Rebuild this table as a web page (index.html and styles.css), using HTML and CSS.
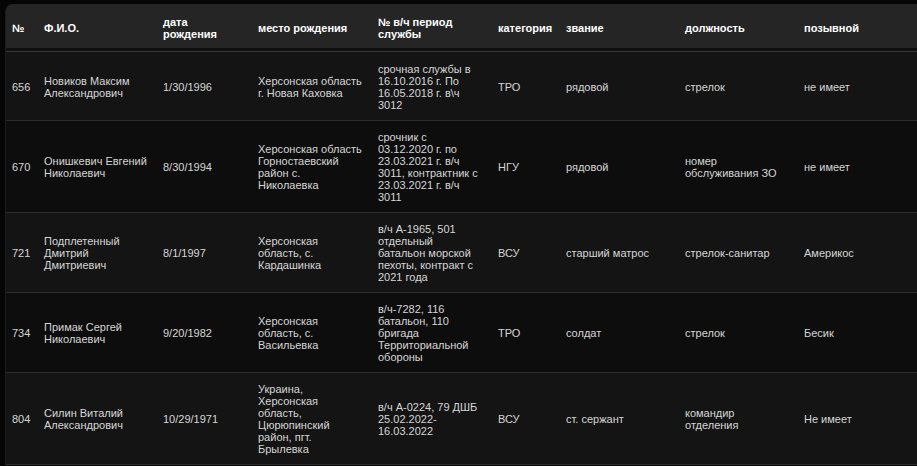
FILE: index.html
```html
<!DOCTYPE html>
<html lang="ru">
<head>
<meta charset="utf-8">
<title>Таблица</title>
<link rel="stylesheet" href="styles.css">
</head>
<body>
<div class="wrap">
<table class="grid">
<colgroup>
<col class="c-num"><col class="c-name"><col class="c-date"><col class="c-place"><col class="c-unit"><col class="c-cat"><col class="c-rank"><col class="c-pos"><col class="c-call">
</colgroup>
<thead>
<tr>
<th>№</th>
<th>Ф.И.О.</th>
<th>дата<br>рождения</th>
<th>место рождения</th>
<th>№ в/ч период<br>службы</th>
<th>категория</th>
<th>звание</th>
<th>должность</th>
<th>позывной</th>
</tr>
</thead>
<tbody>
<tr>
<td>656</td>
<td>Новиков Максим Александрович</td>
<td>1/30/1996</td>
<td>Херсонская область г. Новая Каховка</td>
<td>срочная службы в 16.10.2016 г. По 16.05.2018 г. в\ч 3012</td>
<td>ТРО</td>
<td>рядовой</td>
<td>стрелок</td>
<td>не имеет</td>
</tr>
<tr>
<td>670</td>
<td>Онишкевич Евгений Николаевич</td>
<td>8/30/1994</td>
<td>Херсонская область Горностаевский район с. Николаевка</td>
<td>срочник с 03.12.2020 г. по 23.03.2021 г. в/ч 3011, контрактник с 23.03.2021 г. в/ч 3011</td>
<td>НГУ</td>
<td>рядовой</td>
<td>номер обслуживания ЗО</td>
<td>не имеет</td>
</tr>
<tr>
<td>721</td>
<td>Подплетенный Дмитрий Дмитриевич</td>
<td>8/1/1997</td>
<td>Херсонская область, с. Кардашинка</td>
<td>в/ч А-1965, 501 отдельный батальон морской пехоты, контракт с 2021 года</td>
<td>ВСУ</td>
<td>старший матрос</td>
<td>стрелок-санитар</td>
<td>Америкос</td>
</tr>
<tr>
<td>734</td>
<td>Примак Сергей Николаевич</td>
<td>9/20/1982</td>
<td>Херсонская область, с. Васильевка</td>
<td>в/ч-7282, 116 батальон, 110 бригада Территориальной обороны</td>
<td>ТРО</td>
<td>солдат</td>
<td>стрелок</td>
<td>Бесик</td>
</tr>
<tr>
<td>804</td>
<td>Силин Виталий Александрович</td>
<td>10/29/1971</td>
<td>Украина, Херсонская область, Цюрюпинский район, пгт. Брылевка</td>
<td>в/ч А-0224, 79 ДШБ 25.02.2022-16.03.2022</td>
<td>ВСУ</td>
<td>ст. сержант</td>
<td>командир отделения</td>
<td>Не имеет</td>
</tr>
</tbody>
</table>
</div>
</body>
</html>
```
FILE: styles.css
```css
html, body {
  margin: 0;
  padding: 0;
  background: #050505;
  overflow: hidden;
}
body {
  width: 917px;
  height: 466px;
  font-family: "Liberation Sans", Arial, sans-serif;
  font-size: 11px;
  line-height: 12px;
}
.wrap {
  margin: 4px 0 0 5px;
  width: 924px;
  border-top-left-radius: 7px;
  overflow: hidden;
  border-left: 1px solid #1c1c1c;
}
.grid {
  width: 923px;
  table-layout: fixed;
  border-collapse: separate;
  border-spacing: 0;
}
.c-num { width: 32px; }
.c-name { width: 119px; }
.c-date { width: 95px; }
.c-place { width: 120px; }
.c-unit { width: 120px; }
.c-cat { width: 68px; }
.c-rank { width: 119px; }
.c-pos { width: 119px; }
.c-call { width: 131px; }
.grid th {
  background: #252525;
  color: #ffffff;
  font-weight: bold;
  text-align: left;
  vertical-align: middle;
  padding: 12px 8px 8px 6px;
  border-bottom: 3px solid #101010;
}
.grid tbody tr {
  height: 70px;
}
.grid td {
  color: #d6d6d6;
  text-align: left;
  vertical-align: middle;
  padding: 10px 8px 9px 6px;
  border-bottom: 1px solid #2c2c2c;
  overflow-wrap: break-word;
}
.grid th:first-child,
.grid td:first-child {
  padding-right: 2px;
}
.grid td:nth-child(4) {
  padding-right: 9px;
}
.grid td:nth-child(5) {
  padding-right: 13px;
}
.grid tbody tr:first-child td {
  border-top: 1px solid #3a3a3a;
}
.grid tbody tr:nth-child(odd) td {
  background: #141414;
}
.grid tbody tr:nth-child(even) td {
  background: #0d0d0d;
}
```
